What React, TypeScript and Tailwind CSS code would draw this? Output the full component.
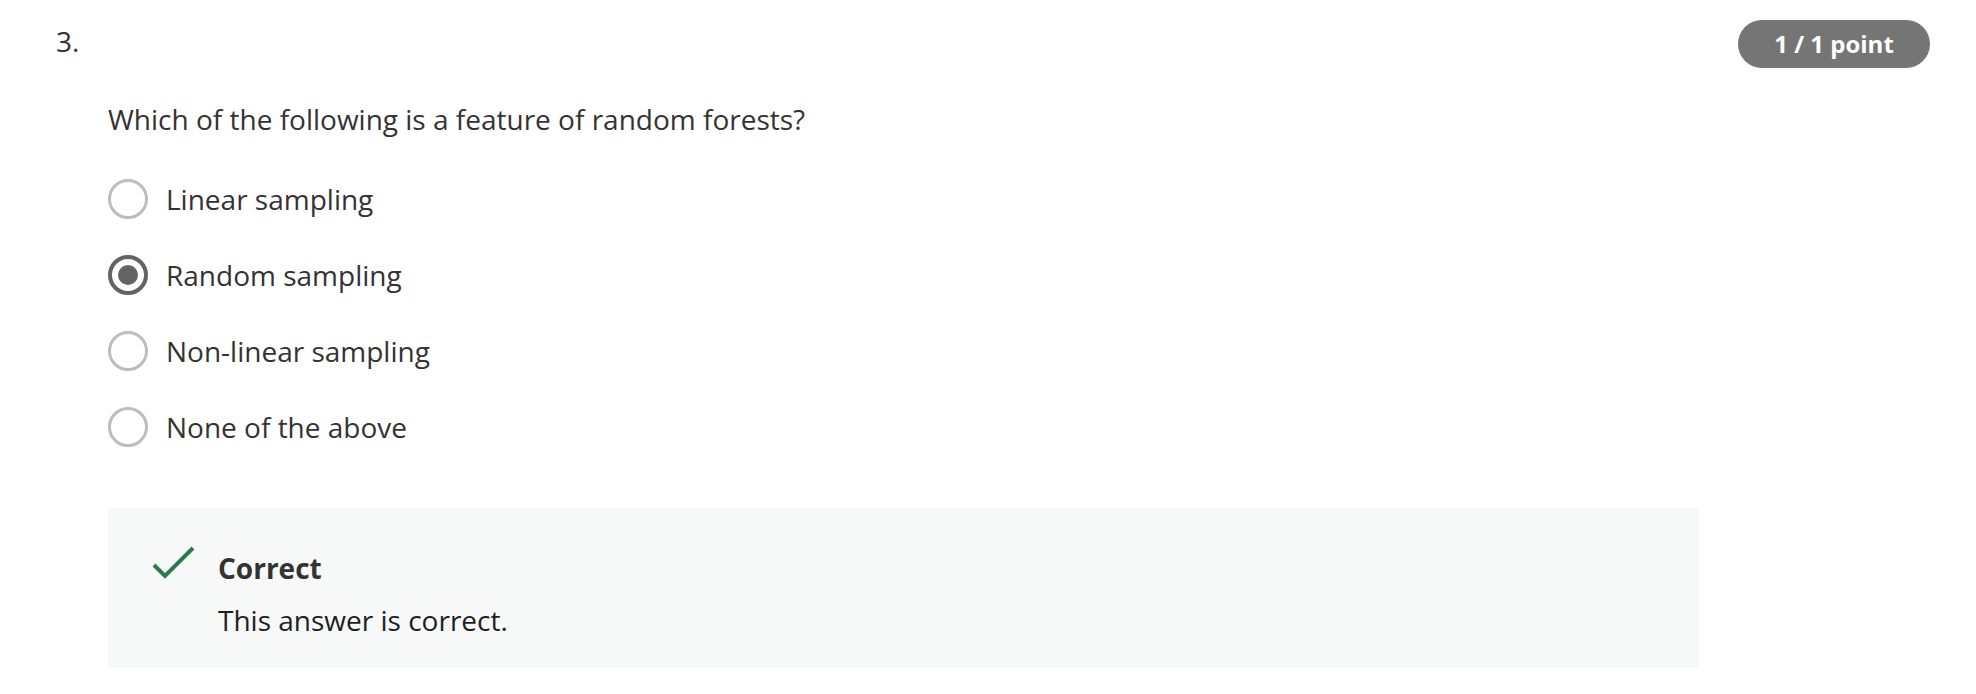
import React from "react";

const options = [
  { label: "Linear sampling", selected: false },
  { label: "Random sampling", selected: true },
  { label: "Non-linear sampling", selected: false },
  { label: "None of the above", selected: false },
];

function Radio({ selected }: { selected: boolean }) {
  if (selected) {
    return (
      <span className="flex h-[40px] w-[40px] shrink-0 items-center justify-center rounded-full border-[4px] border-[#636363]">
        <span className="h-[20px] w-[20px] rounded-full bg-[#636363]" />
      </span>
    );
  }
  return <span className="h-[40px] w-[40px] shrink-0 rounded-full border-[3px] border-[#bdbdbd]" />;
}

export default function App() {
  return (
    <div
      className="w-full bg-white text-[#333333] pl-[56px] pr-[46px] pt-[20px] pb-[26px]"
      style={{ fontFamily: '"Open Sans", "Noto Sans", sans-serif' }}
    >
      <div className="flex items-start justify-between">
        <div className="pt-[1px] text-[28px] leading-[40px]">3.</div>
        <div className="flex h-[48px] w-[192px] items-center justify-center rounded-full bg-[#757575] text-[24px] font-bold text-white">
          1 / 1 point
        </div>
      </div>
      <div className="pl-[52px]">
        <div className="mt-[31px] text-[28px] leading-[40px]">
          Which of the following is a feature of random forests?
        </div>
        <div className="mt-[22px] flex flex-col">
          {options.map((o) => (
            <label key={o.label} className="flex h-[76px] items-center gap-[18px]">
              <Radio selected={o.selected} />
              <span className="text-[28px] leading-[40px]">{o.label}</span>
            </label>
          ))}
        </div>
        <div className="mt-[43px] w-[1591px] bg-[#f7f9f9] pl-[44px] pt-[40px] pb-[28px]">
          <div className="flex items-start gap-[22px]">
            <svg width="44" height="40" viewBox="0 0 44 40" className="-mt-[2px] shrink-0">
              <path d="M2 19 L13 30 L41 2" fill="none" stroke="#2d7a4f" strokeWidth="4" />
            </svg>
            <div className="flex flex-col gap-[12px]">
              <div className="text-[28px] font-bold leading-[40px] text-[#333333]">Correct</div>
              <div className="text-[28px] leading-[40px] text-[#1f1f1f]">This answer is correct.</div>
            </div>
          </div>
        </div>
      </div>
    </div>
  );
}
